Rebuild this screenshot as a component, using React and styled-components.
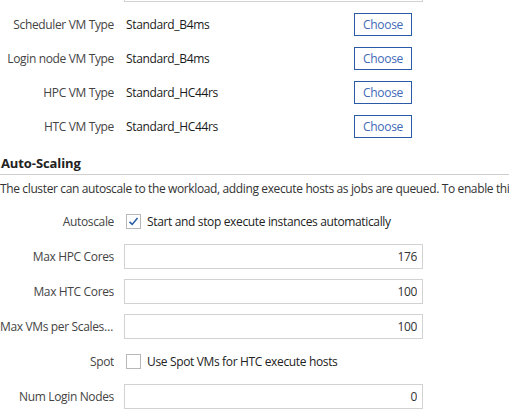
import React from "react";
import styled, { createGlobalStyle } from "styled-components";

const GlobalStyle = createGlobalStyle`
  html, body {
    margin: 0;
    padding: 0;
    background: #ffffff;
    overflow: hidden;
  }
  body {
    font-family: "Segoe UI", "Open Sans", "Noto Sans", sans-serif;
    font-size: 12px;
    letter-spacing: -0.35px;
    color: #222222;
  }
`;

const Page = styled.div`
  width: 509px;
  height: 418px;
  overflow: hidden;
`;

const Form = styled.div`
  margin-top: -23px;
  display: flex;
  flex-direction: column;
`;

const Row = styled.div`
  display: grid;
  grid-template-columns: 114px 299px;
  column-gap: 10px;
  align-items: center;
  height: ${(p) => (p.$compact ? "24px" : "25px")};
  margin-bottom: 10px;
`;

const Label = styled.div`
  text-align: right;
  color: #444444;
  white-space: nowrap;
  overflow: hidden;
  text-overflow: ellipsis;
`;

const Field = styled.div`
  display: flex;
  align-items: center;
  height: 100%;
`;

const Value = styled.div`
  width: 228px;
  padding-left: 2px;
  color: #1a1a1a;
`;

const ChooseButton = styled.button`
  box-sizing: border-box;
  width: 58px;
  height: 23px;
  border: 1px solid #2b5ba6;
  background: #ffffff;
  color: #4169b8;
  font-family: inherit;
  font-size: 12px;
  letter-spacing: -0.3px;
  padding: 0;
  cursor: pointer;
`;

const TextInput = styled.input`
  box-sizing: border-box;
  width: 299px;
  height: 25px;
  border: 1px solid #d2d2d2;
  padding: 0 5px;
  text-align: right;
  font-family: inherit;
  font-size: 12px;
  letter-spacing: -0.35px;
  color: #333333;
  background: #ffffff;
  outline: none;
`;

const Heading = styled.h2`
  margin: 6px 0 0 0;
  padding: 0 0 2px 1px;
  font-size: 13px;
  font-weight: 700;
  letter-spacing: -0.1px;
  line-height: 18px;
  color: #222222;
  border-bottom: 1px solid #cfcfcf;
`;

const Description = styled.p`
  margin: 6px 0 12px 0;
  line-height: 16px;
  white-space: nowrap;
  letter-spacing: -0.37px;
  color: #333333;
`;

const CheckLabel = styled.label`
  display: flex;
  align-items: center;
  gap: 6px;
  padding-left: 2px;
  color: #222222;
`;

const Box = styled.span`
  box-sizing: border-box;
  width: 15px;
  height: 15px;
  border: 1px solid #b8b8b8;
  display: flex;
  align-items: center;
  justify-content: center;
  background: #ffffff;
`;

function Checkbox({ checked, children }) {
  return (
    <CheckLabel>
      <Box>
        {checked && (
          <svg width="11" height="11" viewBox="0 0 11 11">
            <path d="M1.5 5.8 L4.2 8.4 L9.5 2" fill="none" stroke="#2b5ea8" strokeWidth="1.6" />
          </svg>
        )}
      </Box>
      {children}
    </CheckLabel>
  );
}

const vmTypes = [
  { label: "Scheduler VM Type", value: "Standard_B4ms" },
  { label: "Login node VM Type", value: "Standard_B4ms" },
  { label: "HPC VM Type", value: "Standard_HC44rs" },
  { label: "HTC VM Type", value: "Standard_HC44rs" },
];

export default function App() {
  return (
    <Page>
      <GlobalStyle />
      <Form>
        <Row>
          <Label />
          <TextInput readOnly value="" />
        </Row>
        {vmTypes.map((vm) => (
          <Row $compact key={vm.label}>
            <Label>{vm.label}</Label>
            <Field>
              <Value>{vm.value}</Value>
              <ChooseButton>Choose</ChooseButton>
            </Field>
          </Row>
        ))}
        <Heading>Auto-Scaling</Heading>
        <Description>
          The cluster can autoscale to the workload, adding execute hosts as jobs are queued. To enable this, check the box below.
        </Description>
        <Row>
          <Label>Autoscale</Label>
          <Checkbox checked>Start and stop execute instances automatically</Checkbox>
        </Row>
        <Row>
          <Label>Max HPC Cores</Label>
          <TextInput readOnly value="176" />
        </Row>
        <Row>
          <Label>Max HTC Cores</Label>
          <TextInput readOnly value="100" />
        </Row>
        <Row>
          <Label>Max VMs per Scaleset</Label>
          <TextInput readOnly value="100" />
        </Row>
        <Row>
          <Label>Spot</Label>
          <Checkbox>Use Spot VMs for HTC execute hosts</Checkbox>
        </Row>
        <Row>
          <Label>Num Login Nodes</Label>
          <TextInput readOnly value="0" />
        </Row>
      </Form>
    </Page>
  );
}
